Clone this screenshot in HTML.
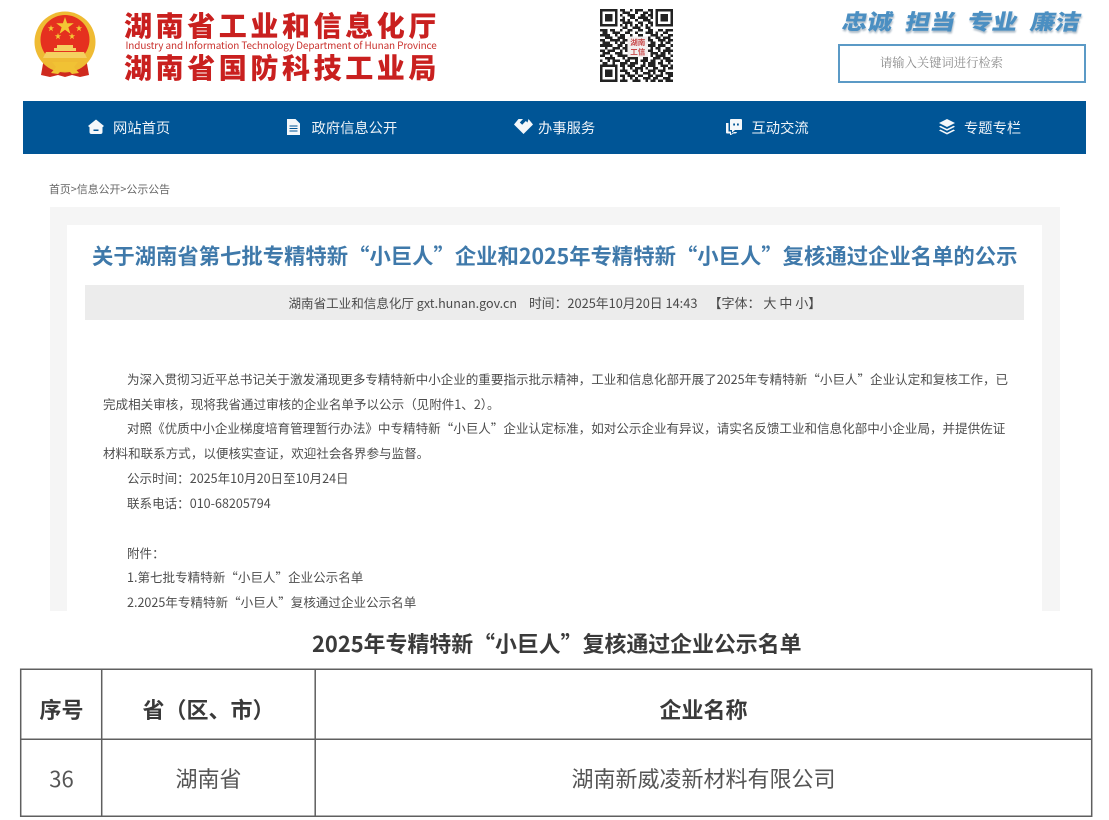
<!DOCTYPE html>
<html lang="zh-CN"><head><meta charset="utf-8"><title>公示</title>
<style>
html,body{margin:0;padding:0;background:#fff}
body{width:1109px;height:820px;position:relative;overflow:hidden;font-family:"Noto Sans CJK SC","Liberation Sans",sans-serif;color:#444}
.a{position:absolute;white-space:nowrap}
.lg{left:124px;font-size:28px;font-weight:900;color:#c9201f;letter-spacing:3.600px;line-height:32px}
.nv{top:118px;font-size:14.300px;color:#eef3f8;line-height:20px}
.bd{font-size:12.550px;line-height:20px;color:#4d4d4d}
.m{top:293px;font-size:12.550px;line-height:20px;color:#4a4a4a}
.sl{top:7px;font-size:25px;line-height:28px;font-weight:900;color:#4b8fc2;text-shadow:1px 2px 2px #aebcc8;transform:skewX(-12deg) scaleY(.86)}
.th{font-size:22px;font-weight:700;color:#3a3a3a;line-height:30px;text-align:center}
.td{font-size:22px;color:#555;line-height:30px;text-align:center}
</style></head><body>

<!-- emblem -->
<svg class="a" style="left:30px;top:8px" width="70" height="72" viewBox="0 0 70 72">
<path d="M14 50 L11 67 L20 69 L28 67 L35 69 L42 67 L50 69 L59 67 L56 50 Z" fill="#cf2a1e"/>
<circle cx="35" cy="34" r="30.500" fill="#efbb33"/>
<circle cx="35" cy="31.500" r="24.500" fill="#e5301f"/>
<path d="M35 9l2.100 6.300 6.700 0-5.400 4 2 6.400-5.400-3.900-5.400 3.900 2-6.400-5.400-4 6.700 0z" fill="#f3c734"/>
<path d="M21 17l.8 2.300 2.400 0-2 1.500.8 2.400-2-1.500-2 1.500.8-2.400-2-1.500 2.400 0zM49 17l.8 2.300 2.400 0-2 1.500.8 2.400-2-1.500-2 1.500.8-2.400-2-1.500 2.400 0zM28 25l.8 2.300 2.400 0-2 1.500.8 2.400-2-1.500-2 1.500.8-2.400-2-1.500 2.400 0zM42 25l.8 2.300 2.400 0-2 1.500.8 2.400-2-1.500-2 1.500.8-2.400-2-1.500 2.400 0z" fill="#f3c734"/>
<path d="M27 37h16v3h3v3H24v-3h3zM16 44h38l3 6H13z" fill="#f5d060"/>
<path d="M12 50h46l-4 6H16z" fill="#efbb33"/>
<path d="M22 54h26l-4 5 5 6-7 1-3-3h-8l-3 3-7-1 5-6z" fill="#f1c234"/>
</svg>

<div class="a lg" style="top:9px">湖南省工业和信息化厅</div>
<div class="a" style="left:125.500px;top:38px;font-size:9.950px;line-height:14px;color:#c9302c;letter-spacing:-.1px">Industry and Information Technology Department of Hunan Province</div>
<div class="a lg" style="top:51px">湖南省国防科技工业局</div>

<!-- QR -->
<svg class="a" style="left:600px;top:9px" width="73" height="73" viewBox="0 0 29 29" shape-rendering="crispEdges">
<g fill="none" stroke="#222" stroke-width="1">
<path d="M0 .5h7M0 1.500h1M6 1.500h1M0 2.500h1M2 2.500h3M6 2.500h1M0 3.500h1M2 3.500h3M6 3.500h1M0 4.500h1M2 4.500h3M6 4.500h1M0 5.500h1M6 5.500h1M0 6.500h7"/>
<path d="M22 .5h7M22 1.500h1M28 1.500h1M22 2.500h1M24 2.500h3M28 2.500h1M22 3.500h1M24 3.500h3M28 3.500h1M22 4.500h1M24 4.500h3M28 4.500h1M22 5.500h1M28 5.500h1M22 6.500h7"/>
<path d="M0 22.500h7M0 23.500h1M6 23.500h1M0 24.500h1M2 24.500h3M6 24.500h1M0 25.500h1M2 25.500h3M6 25.500h1M0 26.500h1M2 26.500h3M6 26.500h1M0 27.500h1M6 27.500h1M0 28.500h7"/>
<path d="M8 .5h2M12 .5h1M14 .5h3M19 .5h2M9 1.500h3M14 1.500h1M17 1.500h2M20 1.500h1M8 2.500h1M11 2.500h3M16 2.500h2M19 2.500h2M9 3.500h1M12 3.500h2M15 3.500h4M20 3.500h1M8 4.500h2M11 4.500h1M14 4.500h1M17 4.500h3M9 5.500h4M15 5.500h2M19 5.500h2M8 6.500h1M10 6.500h1M12 6.500h1M14 6.500h1M16 6.500h1M18 6.500h1M20 6.500h1M9 7.500h2M13 7.500h3M18 7.500h2"/>
<path d="M0 8.500h3M4 8.500h2M8 8.500h1M11 8.500h2M15 8.500h2M19 8.500h2M23 8.500h2M26 8.500h3M1 9.500h2M5 9.500h3M10 9.500h2M14 9.500h1M18 9.500h3M22 9.500h1M25 9.500h2M0 10.500h4M6 10.500h1M8 10.500h2M12 10.500h1M15 10.500h2M20 10.500h3M24 10.500h1M27 10.500h2M2 11.500h3M7 11.500h3M19 11.500h1M22 11.500h2M25 11.500h3M0 12.500h2M4 12.500h4M9 12.500h2M19 12.500h2M23 12.500h3M27 12.500h2M1 13.500h3M6 13.500h1M8 13.500h2M20 13.500h2M24 13.500h1M26 13.500h2M0 14.500h5M7 14.500h2M10 14.500h1M19 14.500h3M23 14.500h3M28 14.500h1M2 15.500h1M5 15.500h3M9 15.500h2M20 15.500h1M22 15.500h2M26 15.500h2M0 16.500h2M3 16.500h3M8 16.500h1M10 16.500h1M19 16.500h2M23 16.500h1M25 16.500h4M1 17.500h3M6 17.500h3M20 17.500h3M24 17.500h2M27 17.500h1M0 18.500h2M4 18.500h1M7 18.500h4M12 18.500h2M15 18.500h3M20 18.500h1M22 18.500h4M28 18.500h1M2 19.500h4M9 19.500h1M11 19.500h4M17 19.500h2M21 19.500h3M25 19.500h3M0 20.500h1M3 20.500h1M5 20.500h3M10 20.500h2M14 20.500h1M16 20.500h3M20 20.500h2M24 20.500h1M26 20.500h3M1 21.500h2M5 21.500h1M8 21.500h3M12 21.500h3M17 21.500h1M19 21.500h3M23 21.500h2M27 21.500h1"/>
<path d="M8 22.500h2M11 22.500h3M16 22.500h2M19 22.500h3M24 22.500h3M28 22.500h1M9 23.500h1M12 23.500h1M14 23.500h3M18 23.500h1M21 23.500h2M25 23.500h1M27 23.500h2M8 24.500h3M13 24.500h2M16 24.500h1M19 24.500h3M23 24.500h3M10 25.500h2M14 25.500h1M17 25.500h3M21 25.500h1M24 25.500h1M26 25.500h3M8 26.500h2M11 26.500h3M15 26.500h2M19 26.500h2M22 26.500h3M27 26.500h2M9 27.500h1M12 27.500h1M14 27.500h1M17 27.500h3M21 27.500h2M25 27.500h3M8 28.500h3M13 28.500h3M18 28.500h1M20 28.500h2M23 28.500h2M26 28.500h3"/>
</g>
<rect x="11" y="11" width="8" height="8" fill="#f1eeee"/>
<text x="15" y="14.400" font-size="3" text-anchor="middle" fill="#c8484a" font-weight="700">湖南</text>
<text x="15" y="18" font-size="3" text-anchor="middle" fill="#c8484a" font-weight="700">工信</text>
</svg>

<!-- slogans -->
<div class="a sl" style="left:843px">忠诚</div>
<div class="a sl" style="left:906px">担当</div>
<div class="a sl" style="left:968px">专业</div>
<div class="a sl" style="left:1031px">廉洁</div>

<div class="a" style="left:838px;top:44px;width:244px;height:35px;border:2px solid #5b9ac6"></div>
<div class="a" style="left:880px;top:52px;font-size:12.300px;line-height:20px;color:#8b8b8b;font-family:'Noto Serif CJK SC','Liberation Serif',serif">请输入关键词进行检索</div>

<!-- nav -->
<div class="a" style="left:23px;top:101px;width:1063px;height:53px;background:#005596"></div>
<svg class="a" style="left:88px;top:119px" width="16" height="16" viewBox="0 0 16 16"><path d="M8 .5L16 7l-1.500 1.200V13a2 2 0 0 1-2 2h-9a2 2 0 0 1-2-2V8.200L0 7zM5.500 10.500V12h5v-1.500z" fill="#f4f7fa" fill-rule="evenodd"/></svg>
<div class="a nv" style="left:113px">网站首页</div>
<svg class="a" style="left:287px;top:119px" width="13" height="16" viewBox="0 0 13 16"><path d="M0 0h8.500L13 4.500V16H0zM2.500 6.500v1h8v-1zM2.500 9v1h8V9zM2.500 11.500v1h8v-1z" fill="#f4f7fa" fill-rule="evenodd"/></svg>
<div class="a nv" style="left:311.500px">政府信息公开</div>
<svg class="a" style="left:514px;top:119px" width="19" height="15" viewBox="0 0 19 15"><path d="M4.500 0H9L5.800 3.500l2.400 2.200L11.800 2l1.700 1.500 1-3.500L19 5.500 9.500 15 0 5.500z" fill="#f4f7fa"/></svg>
<div class="a nv" style="left:538px">办事服务</div>
<svg class="a" style="left:726px;top:119px" width="16" height="16" viewBox="0 0 16 16"><path d="M5 0h10a1 1 0 0 1 1 1v9a1 1 0 0 1-1 1H9l-3 2.500V11H4V1a1 1 0 0 1 1-1zM7.200 4.500v2H9v-2zM11 4.500v2h1.800v-2z" fill="#f4f7fa" fill-rule="evenodd"/><path d="M0 4h2.500v8.500H5V15l3-2h3c-.5 1.200-1 1.500-2 1.500H7.500L4 16.500v-2H1a1 1 0 0 1-1-1z" fill="#f4f7fa"/></svg>
<div class="a nv" style="left:751.500px">互动交流</div>
<svg class="a" style="left:939px;top:119px" width="16" height="16" viewBox="0 0 16 16"><path d="M8 0l8 4-8 4-8-4z" fill="#f4f7fa"/><path d="M1.500 6.800L8 10l6.500-3.200L16 7.800l-8 4-8-4z" fill="#f4f7fa"/><path d="M1.500 10.500L8 13.800l6.500-3.300L16 11.500l-8 4-8-4z" fill="#f4f7fa"/></svg>
<div class="a nv" style="left:964px">专题专栏</div>

<!-- crumb -->
<div class="a" style="left:49px;top:180px;font-size:10.900px;line-height:18px;color:#666">首页&gt;信息公开&gt;公示公告</div>

<!-- panel -->
<div class="a" style="left:50px;top:207px;width:1010px;height:404px;background:#f5f5f5"></div>
<div class="a" style="left:67px;top:225px;width:975px;height:386px;background:#fff"></div>
<div class="a" style="left:92px;top:241px;font-size:21.350px;line-height:30px;font-weight:700;color:#3f79aa">关于湖南省第七批专精特新“小巨人”企业和2025年专精特新“小巨人”复核通过企业名单的公示</div>
<div class="a" style="left:85px;top:285px;width:939px;height:35px;background:#ececec"></div>
<div class="a m" style="left:288.500px">湖南省工业和信息化厅 gxt.hunan.gov.cn</div>
<div class="a m" style="left:529px;font-size:12.800px">时间：2025年10月20日 14:43</div>
<div class="a m" style="left:708.500px;font-size:13px">【字体： 大 中 小】</div>

<div class="a bd" style="left:127px;top:369px">为深入贯彻习近平总书记关于激发涌现更多专精特新中小企业的重要指示批示精神，工业和信息化部开展了2025年专精特新“小巨人”企业认定和复核工作，已</div>
<div class="a bd" style="left:103px;top:394px">完成相关审核，现将我省通过审核的企业名单予以公示（见附件1、2）。</div>
<div class="a bd" style="left:127px;top:418px">对照《优质中小企业梯度培育管理暂行办法》中专精特新“小巨人”企业认定标准，如对公示企业有异议，请实名反馈工业和信息化部中小企业局，并提供佐证</div>
<div class="a bd" style="left:103px;top:443px">材料和联系方式，以便核实查证，欢迎社会各界参与监督。</div>
<div class="a bd" style="left:127px;top:468px">公示时间：2025年10月20日至10月24日</div>
<div class="a bd" style="left:127px;top:493px">联系电话：010-68205794</div>
<div class="a bd" style="left:127px;top:543px">附件：</div>
<div class="a bd" style="left:127px;top:567px">1.第七批专精特新“小巨人”企业公示名单</div>
<div class="a bd" style="left:127px;top:592px">2.2025年专精特新“小巨人”复核通过企业公示名单</div>

<!-- table -->
<div class="a" style="left:312px;top:629px;font-size:21.900px;line-height:30px;font-weight:700;color:#3a3a3a">2025年专精特新“小巨人”复核通过企业公示名单</div>
<svg class="a" style="left:0;top:660px" width="1109" height="160" viewBox="0 660 1109 160">
<path d="M20.700 669.300H1091.700V816.300H20.700ZM101.700 669.300V816.300M315.200 669.300V816.300M20.700 739.300H1091.700" fill="none" stroke="#5f5f5f" stroke-width="1.500"/>
</svg>
<div class="a th" style="left:22px;top:694px;width:79px">序号</div>
<div class="a th" style="left:102px;top:694px;width:213px">省（区、市）</div>
<div class="a th" style="left:316px;top:694px;width:775px">企业名称</div>
<div class="a td" style="left:22px;top:763px;width:79px">36</div>
<div class="a td" style="left:102px;top:763px;width:213px">湖南省</div>
<div class="a td" style="left:316px;top:763px;width:775px">湖南新威凌新材料有限公司</div>
</body></html>
